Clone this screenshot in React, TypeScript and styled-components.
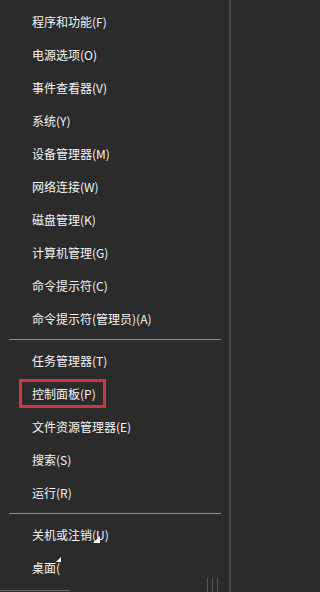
import React from "react";
import styled, { createGlobalStyle } from "styled-components";

const Global = createGlobalStyle`
  html, body { margin: 0; padding: 0; background: #2b2b2b; }
  body { width: 231px; height: 592px; overflow: hidden; }
  #root { width: 231px; height: 592px; }
`;

const Menu = styled.div`
  position: relative;
  box-sizing: border-box;
  width: 231px;
  height: 592px;
  background: #2b2b2b;
  border-right: 2px solid #474747;
  padding-top: 5px;
  display: flex;
  flex-direction: column;
  font-family: "Microsoft YaHei", "Noto Sans CJK SC", "Noto Sans", sans-serif;
  font-size: 12px;
  color: #f4f4f4;
`;

const Item = styled.div`
  position: relative;
  height: 33px;
  display: flex;
  align-items: center;
  padding-left: 32px;
  white-space: nowrap;
  line-height: 1;
`;

const Separator = styled.div`
  height: 9px;
  display: flex;
  align-items: center;
  padding: 0 8px 0 9px;
  &::after {
    content: "";
    flex: 1;
    height: 1px;
    background: #8e8e8e;
  }
`;

const Highlight = styled.div`
  position: absolute;
  left: 19px;
  top: 2px;
  width: 87px;
  height: 29px;
  box-sizing: border-box;
  border: 3px solid #d0363b;
  pointer-events: none;
`;

const Cursor = styled.span`
  position: absolute;
  width: 0;
  height: 0;
  border-style: solid;
  border-color: transparent transparent #ffffff transparent;
  border-width: 0 0 ${(p: { $s: number }) => p.$s}px ${(p: { $s: number }) => p.$s}px;
`;

const TaskbarEdge = styled.div`
  position: absolute;
  left: 0;
  bottom: 1px;
  width: 70px;
  height: 1px;
  background: #6a6a6a;
`;

const TaskbarTicks = styled.div`
  position: absolute;
  right: 11px;
  bottom: 0;
  height: 15px;
  display: flex;
  gap: 4px;
  & > span {
    width: 1px;
    height: 100%;
    background: #555;
  }
`;

type Entry = { label: string; boxed?: boolean } | "sep";

const entries: Entry[] = [
  { label: "程序和功能(F)" },
  { label: "电源选项(O)" },
  { label: "事件查看器(V)" },
  { label: "系统(Y)" },
  { label: "设备管理器(M)" },
  { label: "网络连接(W)" },
  { label: "磁盘管理(K)" },
  { label: "计算机管理(G)" },
  { label: "命令提示符(C)" },
  { label: "命令提示符(管理员)(A)" },
  "sep",
  { label: "任务管理器(T)" },
  { label: "控制面板(P)", boxed: true },
  { label: "文件资源管理器(E)" },
  { label: "搜索(S)" },
  { label: "运行(R)" },
  "sep",
  { label: "关机或注销(U)" },
  { label: "桌面(" },
];

export default function App() {
  return (
    <>
      <Global />
      <Menu>
        {entries.map((e, i) =>
          e === "sep" ? (
            <Separator key={i} />
          ) : (
            <Item key={i}>
              {e.label}
              {e.boxed && <Highlight />}
              {e.label === "关机或注销(U)" && (
                <Cursor $s={7} style={{ left: 93, top: 18 }} />
              )}
              {e.label === "桌面(" && (
                <Cursor $s={5} style={{ left: 56, top: 6 }} />
              )}
            </Item>
          )
        )}
        <TaskbarEdge />
        <TaskbarTicks>
          <span />
          <span />
          <span />
        </TaskbarTicks>
      </Menu>
    </>
  );
}
